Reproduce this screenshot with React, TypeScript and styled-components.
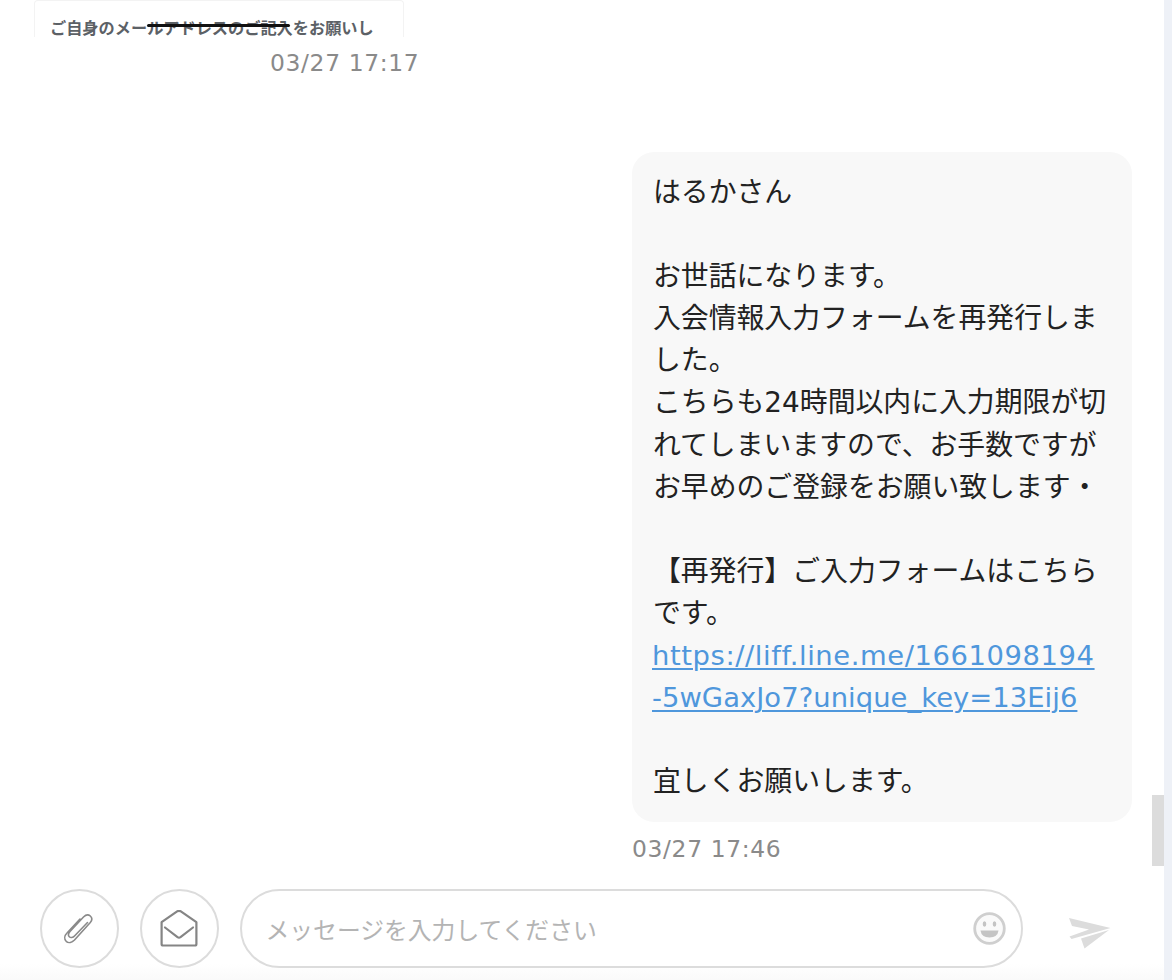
import React from "react";
import styled, { createGlobalStyle } from "styled-components";

const Global = createGlobalStyle`
  html, body { margin: 0; padding: 0; background: #fff; }
  body { font-family: "DejaVu Sans", "Noto Sans CJK JP", sans-serif; }
`;
const Page = styled.div`
  width: 1172px; height: 980px; display: flex; overflow: hidden; background: #eef1f7;
`;
const Main = styled.main`
  position: relative; width: 1164px; height: 980px; display: flex; flex-direction: column; background: #fff;
`;
const Thread = styled.div`
  height: 870px; display: flex; flex-direction: column; overflow: hidden;
`;
const Attachment = styled.div`
  width: 370px; height: 37px; margin-left: 34px; box-sizing: border-box; padding: 17px 0 0 15px;
  border: 1px solid #f3f3f3; border-bottom: none; border-radius: 4px 4px 0 0; flex: none;
`;
const AttachmentText = styled.div`
  font-family: "Noto Sans CJK JP", sans-serif; font-size: 16.2px; line-height: 19px; font-weight: 700; color: #5c6166; white-space: nowrap;
`;
const Struck = styled.span`
  position: relative;
  &::after { content: ""; position: absolute; left: 0; right: 3px; top: 9px; height: 3px; border-radius: 2px; background: #111; }
`;
const Time = styled.div<{ $top: number; $left: number }>`
  margin: ${p => p.$top}px 0 0 ${p => p.$left}px; font-size: 23.4px; line-height: 30px; letter-spacing: 0.65px; color: #8a8a8a; white-space: nowrap; flex: none;
`;
const Bubble = styled.div`
  width: 500px; height: 670px; box-sizing: border-box; margin: 74px 0 12px 632px; padding: 20px 0 0 21px;
  background: #f8f8f8; border-radius: 22px; flex: none;
  font-family: "DejaVu Sans", "Noto Sans CJK JP", sans-serif; font-size: 27.85px; line-height: 42.1px; color: #222; white-space: nowrap;
`;
const Line = styled.div`
  min-height: 42.1px;
`;
const LinkLine = styled.a<{ $spacing: number }>`
  display: block; margin-left: -1px; color: #4f97dc; text-decoration: underline; text-decoration-thickness: 2px; text-underline-offset: 3px;
  font-size: 27.4px; letter-spacing: ${p => p.$spacing}px;
`;
const Composer = styled.div`
  height: 110px; box-sizing: border-box; padding: 19px 0 0 39.5px; display: flex; align-items: flex-start; gap: 21px;
  background: linear-gradient(#fff 0, #fff 94px, #fafafa 100%);
`;
const RoundButton = styled.button`
  width: 79px; height: 79px; box-sizing: border-box; padding: 0; border: 2px solid #dcdcdc; border-radius: 50%;
  background: #fff; display: flex; align-items: center; justify-content: center; flex: none;
`;
const InputBox = styled.div`
  width: 783px; height: 79px; box-sizing: border-box; padding: 0 15px 0 24px; border: 2px solid #dcdcdc; border-radius: 40px;
  background: #fff; display: flex; align-items: center; justify-content: space-between; flex: none;
`;
const Placeholder = styled.span`
  font-family: "Noto Sans CJK JP", sans-serif; font-size: 23.8px; color: #b4b4b4;
`;
const SendButton = styled.button`
  margin: 28px 0 0 24px; padding: 0; border: none; background: none; width: 44px; height: 32px; flex: none;
`;
const ScrollThumb = styled.div`
  position: absolute; left: 1152px; top: 795px; width: 12px; height: 71px; background: #dcdcdc;
`;

const lines = [
  "はるかさん", "", "お世話になります。", "入会情報入力フォームを再発行しま", "した。",
  "こちらも24時間以内に入力期限が切", "れてしまいますので、お手数ですが", "お早めのご登録をお願い致します・", "",
  "【再発行】ご入力フォームはこちら", "です。",
];

export default function App() {
  return (
    <Page>
      <Global />
      <Main>
        <Thread>
          <Attachment>
            <AttachmentText>ご自身のメー<Struck>ルアドレスのご記入</Struck>をお願いし</AttachmentText>
          </Attachment>
          <Time $top={11} $left={270}>03/27 17:17</Time>
          <Bubble>
            {lines.map((l, i) => <Line key={i}>{l}</Line>)}
            <LinkLine href="#" $spacing={0.58}>https://liff.line.me/1661098194</LinkLine>
            <LinkLine href="#" $spacing={0.05}>-5wGaxJo7?unique_key=13Eij6</LinkLine>
            <Line />
            <Line>宜しくお願いします。</Line>
          </Bubble>
          <Time $top={0} $left={632}>03/27 17:46</Time>
        </Thread>
        <Composer>
          <RoundButton aria-label="attach">
            <svg width="32" height="34" viewBox="0 0 32 34" fill="none" stroke="#8a8a8a" strokeWidth="1.6" strokeLinecap="round" strokeLinejoin="round">
              <path d="M24.5 10.5 L11.5 24 C10 25.8 7.5 26 6.3 24.8 C5 23.5 5.3 21.5 7 19.5 L20.5 5 C22.5 3 25 2 27.3 4 C29.5 6 29 8.5 27.3 10.5 L11.5 28 C9 30.5 5.5 31.5 3.2 29.3 C1 27 1.4 23.5 4 21 L17 7" />
            </svg>
          </RoundButton>
          <RoundButton aria-label="template">
            <svg width="38" height="38" viewBox="0 0 38 38" fill="none" stroke="#858585" strokeWidth="2.2" strokeLinecap="round" strokeLinejoin="round">
              <path d="M1.6 12.2 L17.5 1.2 Q19 0.4 20.5 1.2 L36.4 12.2 V34 Q36.4 35.5 34.9 35.5 H3.1 Q1.6 35.5 1.6 34 Z" />
              <path d="M5 17.5 L17.5 27.2 Q19 28.2 20.5 27.2 L33 17.5" />
            </svg>
          </RoundButton>
          <InputBox>
            <Placeholder>メッセージを入力してください</Placeholder>
            <svg width="33" height="33" viewBox="0 0 33 33">
              <circle cx="16.5" cy="16.5" r="14.8" fill="#fafafa" stroke="#cfcfcf" strokeWidth="2.8" />
              <ellipse cx="11.5" cy="12" rx="1.8" ry="2.8" fill="#c4c4c4" />
              <ellipse cx="21.5" cy="12" rx="1.8" ry="2.8" fill="#c4c4c4" />
              <path d="M7.5 18.5 H25.5 Q24.5 25.5 16.5 25.5 Q8.5 25.5 7.5 18.5 Z" fill="#c4c4c4" />
            </svg>
          </InputBox>
          <SendButton aria-label="send">
            <svg width="44" height="32" viewBox="0 0 44 32" fill="#dcdcdc">
              <path d="M1 1 L42.5 11 L3.5 22 L1.5 19.5 L21 12.5 L4 9 Z" />
              <path d="M13 21.5 L41 13 L16.5 31.5 Z" />
            </svg>
          </SendButton>
        </Composer>
        <ScrollThumb />
      </Main>
    </Page>
  );
}
